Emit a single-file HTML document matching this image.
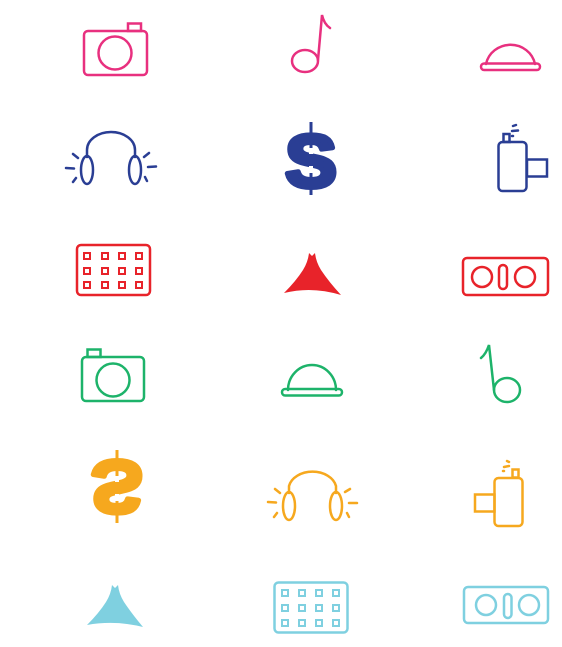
<!DOCTYPE html>
<html><head><meta charset="utf-8"><style>
html,body{margin:0;padding:0;background:#fff;}
svg{display:block}
</style></head><body>
<svg width="562" height="647" viewBox="0 0 562 647" xmlns="http://www.w3.org/2000/svg" fill="none" stroke-width="2.5" stroke-linecap="round">
<!-- Row 1 pink -->
<g stroke="#e8307f">
<rect x="84" y="31" width="63" height="44" rx="4"/>
<rect x="128" y="23.5" width="13" height="7.5"/>
<circle cx="115" cy="53" r="16.5"/>
<ellipse cx="305" cy="61" rx="13" ry="11"/>
<path d="M318 60 L322 15 Q324 24 330 28"/>
<path d="M486 64 A25 24 0 0 1 535 64"/>
<rect x="481" y="63.5" width="59" height="6.5" rx="3.2"/>
</g>
<!-- Row 2 blue -->
<g stroke="#2a3e94">
<path d="M87 157 L87 150 A24 18 0 0 1 135 150 L135 157"/>
<ellipse cx="87" cy="170" rx="6" ry="14"/>
<ellipse cx="135" cy="170" rx="6" ry="14"/>
<path d="M66 168 L74 168.5 M73 154 L78 158 M73 182 L76 178 M156 166.5 L148 167 M149 153 L144 157 M147 181 L145 177"/>
<rect x="498.5" y="142" width="28" height="49" rx="4"/>
<rect x="527" y="159.5" width="20" height="17"/>
<rect x="503.5" y="134" width="6" height="8"/>
<path d="M512 131 L518 130.5 M513 126 L516 125 M512 136 L513 136"/>
</g>
<g fill="#2a3e94">
<rect x="309.5" y="122" width="3" height="73"/>
<text x="311" y="187" text-anchor="middle" font-family="Liberation Sans, sans-serif" font-weight="bold" font-size="74" stroke="#2a3e94" stroke-width="5" stroke-linejoin="round" transform="translate(311 160) scale(1.05 1) translate(-311 -160)">S</text>
<path d="M309 148 h4 v6 h-4z M309 166 h4 v7 h-4z" fill="#fff"/>
</g>
<!-- Row 3 red -->
<g stroke="#e8232a">
<rect x="77" y="245" width="73" height="50" rx="4"/>
<g stroke-width="2">
<rect x="84" y="253" width="6" height="6"/><rect x="102" y="253" width="6" height="6"/><rect x="119" y="253" width="6" height="6"/><rect x="136" y="253" width="6" height="6"/>
<rect x="84" y="268" width="6" height="6"/><rect x="102" y="268" width="6" height="6"/><rect x="119" y="268" width="6" height="6"/><rect x="136" y="268" width="6" height="6"/>
<rect x="84" y="282" width="6" height="6"/><rect x="102" y="282" width="6" height="6"/><rect x="119" y="282" width="6" height="6"/><rect x="136" y="282" width="6" height="6"/>
</g>
<rect x="463" y="258" width="85" height="37" rx="4"/>
<circle cx="482" cy="277" r="10"/>
<circle cx="525" cy="277" r="10"/>
<rect x="499" y="265" width="8" height="24" rx="4"/>
</g>
<path fill="#e8232a" d="M284 293 Q296 281 303 270 Q308 262 309 253 L312 256 L315 253 Q316 262 321 270 Q329 282 341 295 Q312 286 284 293Z"/>
<!-- Row 4 green -->
<g stroke="#1db36a">
<rect x="82" y="357" width="62" height="44" rx="4"/>
<rect x="87.5" y="349.5" width="13" height="7.5"/>
<circle cx="113" cy="380" r="16.5"/>
<path d="M288 390 A24 25 0 0 1 336 390"/>
<rect x="282" y="389" width="60" height="6.5" rx="3.2"/>
<ellipse cx="507" cy="390" rx="13" ry="12"/>
<path d="M494 390 L489 345 Q486 354 481 358"/>
</g>
<!-- Row 5 orange -->
<g fill="#f6a81e">
<rect x="115.5" y="450" width="3" height="73"/>
<text x="117" y="515" text-anchor="middle" font-family="Liberation Sans, sans-serif" font-weight="bold" font-size="74" stroke="#f6a81e" stroke-width="5" stroke-linejoin="round" transform="translate(117 488) scale(1.05 -1) translate(-117 -488)">S</text>
<path d="M115 476 h4 v6 h-4z M115 494 h4 v7 h-4z" fill="#fff"/>
</g>
<g stroke="#f6a81e">
<path d="M289 493 L289 486 A24 18 0 0 1 336 486 L336 493"/>
<ellipse cx="289" cy="506" rx="6" ry="14"/>
<ellipse cx="336" cy="506" rx="6" ry="14"/>
<path d="M268 502 L276 502.5 M275 489 L280 493 M274 517 L277 513 M357 503 L349 503 M350 489 L345 492 M349 517 L347 513"/>
<rect x="494.5" y="478" width="28" height="48" rx="4"/>
<rect x="475" y="494.5" width="19.5" height="17"/>
<rect x="512.5" y="469.5" width="6" height="8"/>
<path d="M504 467 L509 466 M507 461 L509 462 M503 471 L504 471"/>
</g>
<!-- Row 6 cyan -->
<path fill="#7fd0e0" d="M87 625 Q99 613 106 602 Q111 594 112 585 L115 588 L118 585 Q119 594 124 602 Q132 614 143 627 Q115 620 87 625Z"/>
<g stroke="#7fd0e0">
<rect x="274.5" y="582.5" width="73" height="50" rx="4"/>
<g stroke-width="2">
<rect x="282" y="590" width="6" height="6"/><rect x="299" y="590" width="6" height="6"/><rect x="316" y="590" width="6" height="6"/><rect x="333" y="590" width="6" height="6"/>
<rect x="282" y="605" width="6" height="6"/><rect x="299" y="605" width="6" height="6"/><rect x="316" y="605" width="6" height="6"/><rect x="333" y="605" width="6" height="6"/>
<rect x="282" y="620" width="6" height="6"/><rect x="299" y="620" width="6" height="6"/><rect x="316" y="620" width="6" height="6"/><rect x="333" y="620" width="6" height="6"/>
</g>
<rect x="464" y="587" width="84" height="36" rx="4"/>
<circle cx="486" cy="605" r="10"/>
<circle cx="529" cy="605" r="10"/>
<rect x="504" y="594" width="7.5" height="24" rx="3.7"/>
</g>
</svg>
</body></html>
